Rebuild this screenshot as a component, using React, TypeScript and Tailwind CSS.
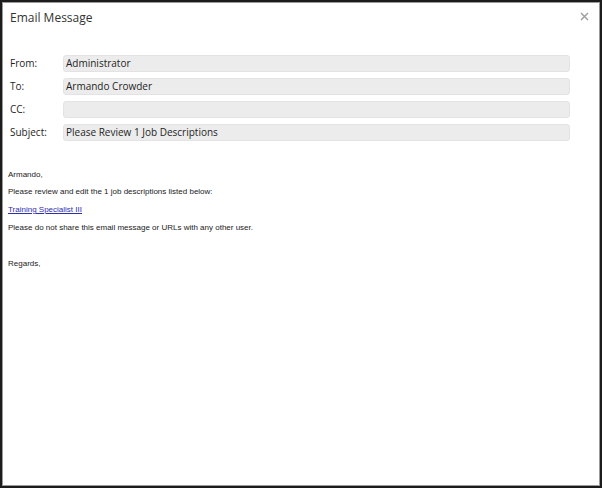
import React from "react";

const fields = [
  { label: "From:", value: "Administrator" },
  { label: "To:", value: "Armando Crowder" },
  { label: "CC:", value: "" },
  { label: "Subject:", value: "Please Review 1 Job Descriptions" },
];

export default function App() {
  return (
    <div className="relative w-[602px] h-[488px] bg-[#1c1c1c] p-[2px] box-border">
      <div className="relative w-full h-full bg-white border border-[#9a9a9a] box-border">
        <div
          className="pl-[7px] pt-[6px] text-[12px] leading-[18px] text-[#333]"
          style={{ fontFamily: '"Open Sans", sans-serif' }}
        >
          Email Message
        </div>
        <button className="absolute right-[10px] top-[8px] w-[10px] h-[10px] flex items-center justify-center">
          <svg width="9" height="9" viewBox="0 0 9 9">
            <path d="M1 1 L8 8 M8 1 L1 8" stroke="#9c9c9c" strokeWidth="1.4" />
          </svg>
        </button>

        <div
          className="mt-[28px] ml-[7px] grid grid-cols-[53px_507px] gap-y-[6px] text-[10px] text-[#1e1e1e]"
          style={{ fontFamily: '"Open Sans", sans-serif' }}
        >
          {fields.map((f) => (
            <React.Fragment key={f.label}>
              <div className="h-[17px] flex items-center">{f.label}</div>
              <div className="h-[17px] flex items-center rounded-[3px] bg-[#ececec] border border-[#e3e3e3] pl-[2px]">
                {f.value}
              </div>
            </React.Fragment>
          ))}
        </div>

        <div
          className="mt-[29px] ml-[5px] text-[8px] leading-[10px] text-[#222]"
          style={{ fontFamily: '"Liberation Sans", Arial, sans-serif' }}
        >
          <p className="mb-[7px]">Armando,</p>
          <p className="mb-[8px]">Please review and edit the 1 job descriptions listed below:</p>
          <p className="mb-[8px]">
            <a href="#" className="text-[#2e2eb0] underline">Training Specialist III</a>
          </p>
          <p className="mb-[8px]">Please do not share this email message or URLs with any other user.</p>
          <p className="mb-[8px] h-[10px]"></p>
          <p className="mb-[8px]">Regards,</p>
        </div>
      </div>
    </div>
  );
}
